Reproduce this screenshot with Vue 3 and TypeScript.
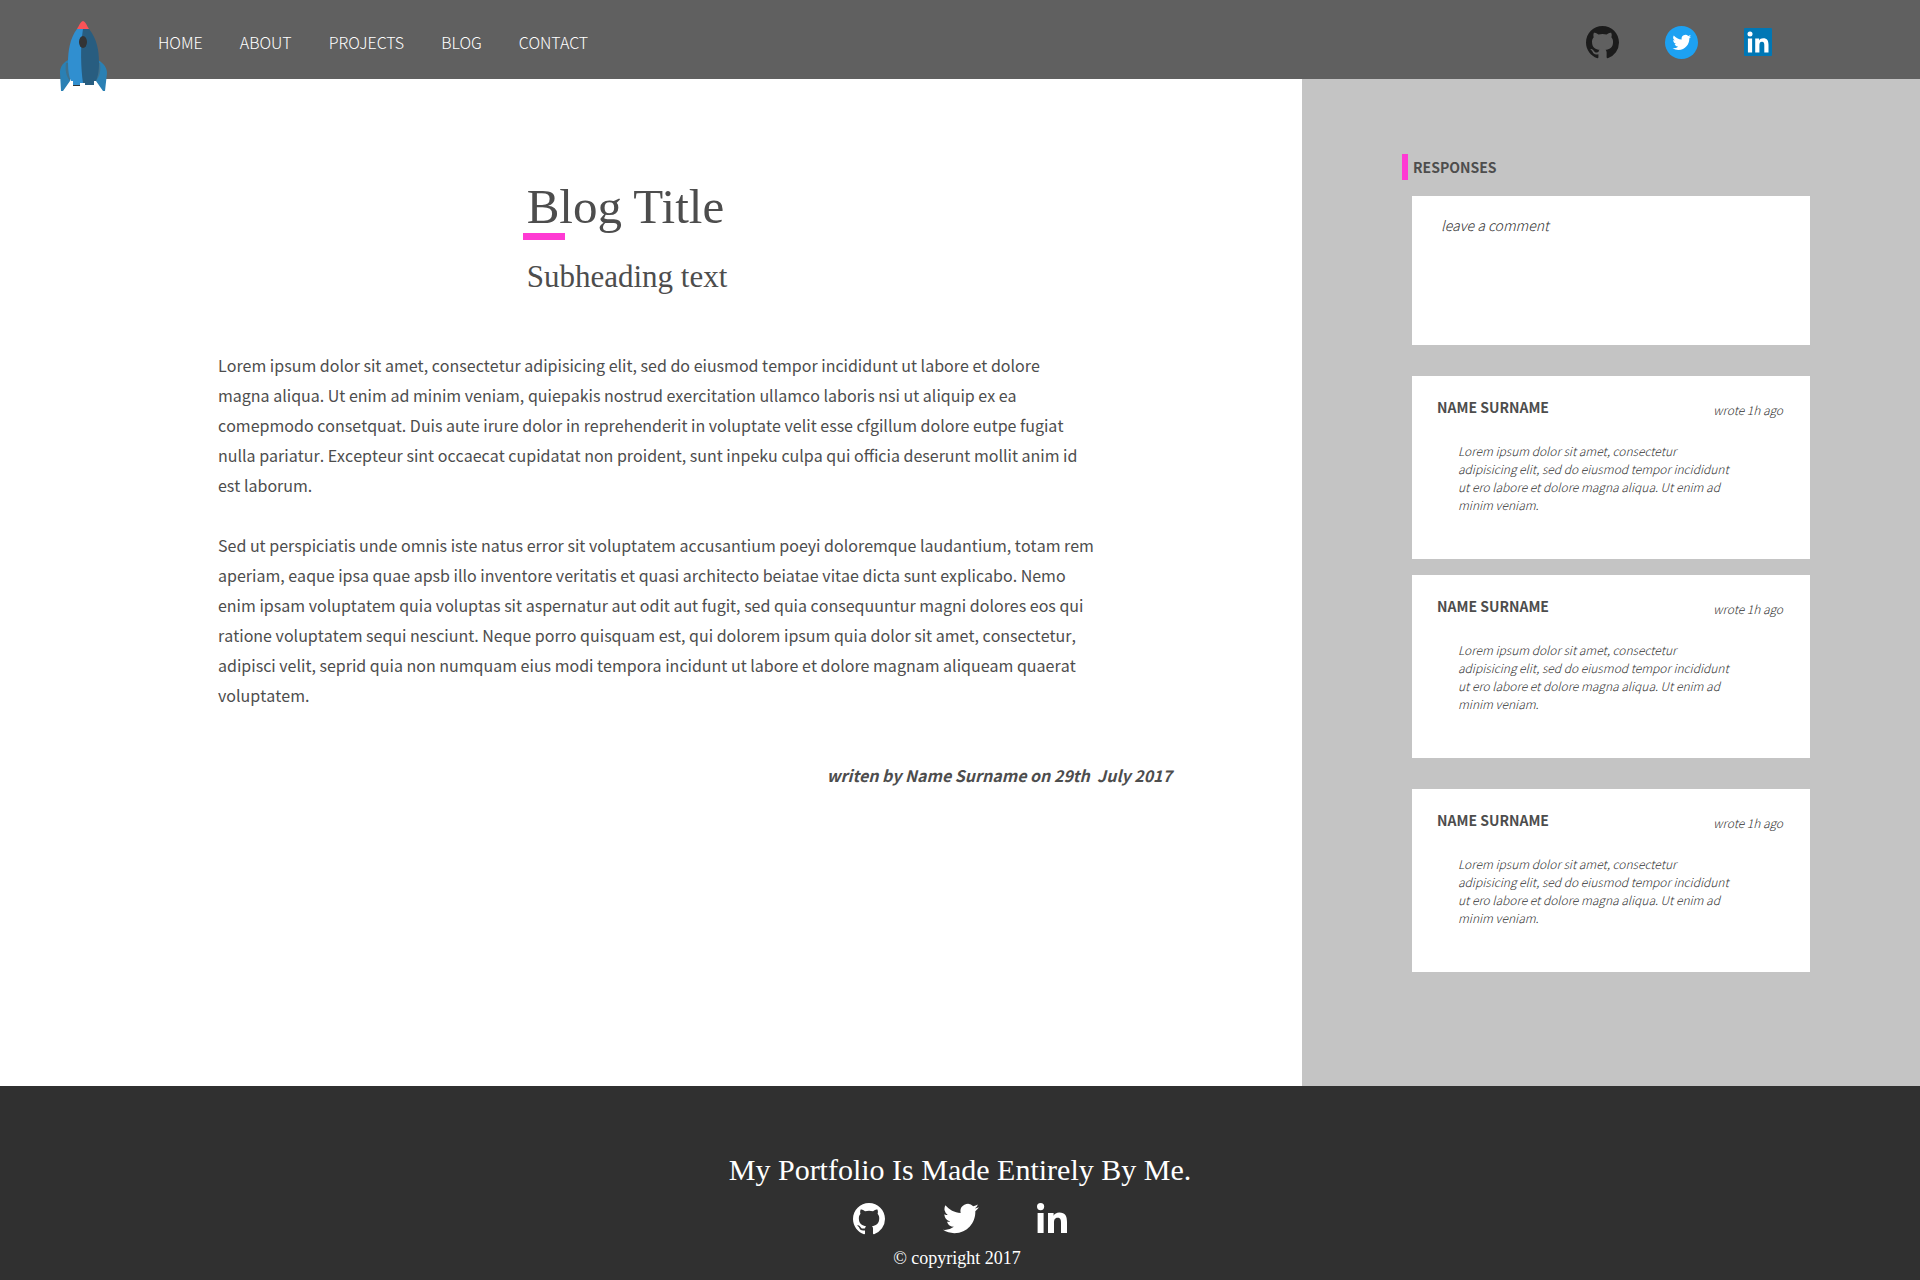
<script setup lang="ts">
interface Comment {
  id: number
  author: string
  posted: string
  text: string
}

const links: string[] = ['HOME', 'ABOUT', 'PROJECTS', 'BLOG', 'CONTACT']

const paragraphs: string[] = [
  `Lorem ipsum dolor sit amet, consectetur adipisicing elit, sed do eiusmod tempor incididunt ut labore et dolore
magna aliqua. Ut enim ad minim veniam, quiepakis nostrud exercitation ullamco laboris nsi ut aliquip ex ea
comepmodo consetquat. Duis aute irure dolor in reprehenderit in voluptate velit esse cfgillum dolore eutpe fugiat
nulla pariatur. Excepteur sint occaecat cupidatat non proident, sunt inpeku culpa qui officia deserunt mollit anim id
est laborum.`,
  `Sed ut perspiciatis unde omnis iste natus error sit voluptatem accusantium poeyi doloremque laudantium, totam rem
aperiam, eaque ipsa quae apsb illo inventore veritatis et quasi architecto beiatae vitae dicta sunt explicabo. Nemo
enim ipsam voluptatem quia voluptas sit aspernatur aut odit aut fugit, sed quia consequuntur magni dolores eos qui
ratione voluptatem sequi nesciunt. Neque porro quisquam est, qui dolorem ipsum quia dolor sit amet, consectetur,
adipisci velit, seprid quia non numquam eius modi tempora incidunt ut labore et dolore magnam aliqueam quaerat
voluptatem.`,
]

const commentText = `Lorem ipsum dolor sit amet, consectetur
adipisicing elit, sed do eiusmod tempor incididunt
ut ero labore et dolore magna aliqua. Ut enim ad
minim veniam.`

const comments: Comment[] = [1, 2, 3].map((id) => ({
  id,
  author: 'NAME SURNAME',
  posted: 'wrote 1h ago',
  text: commentText,
}))

const githubPath =
  'M8 0C3.58 0 0 3.58 0 8c0 3.54 2.29 6.53 5.47 7.59.4.07.55-.17.55-.38 0-.19-.01-.82-.01-1.49-2.01.37-2.53-.49-2.69-.94-.09-.23-.48-.94-.82-1.13-.28-.15-.68-.52-.01-.53.63-.01 1.08.58 1.23.82.72 1.21 1.87.87 2.33.66.07-.52.28-.87.51-1.07-1.78-.2-3.64-.89-3.64-3.95 0-.87.31-1.59.82-2.15-.08-.2-.36-1.02.08-2.12 0 0 .67-.21 2.2.82.64-.18 1.32-.27 2-.27s1.36.09 2 .27c1.53-1.04 2.2-.82 2.2-.82.44 1.1.16 1.92.08 2.12.51.56.82 1.27.82 2.15 0 3.07-1.87 3.75-3.65 3.95.29.25.54.73.54 1.48 0 1.07-.01 1.93-.01 2.2 0 .21.15.46.55.38A8.01 8.01 0 0 0 16 8c0-4.42-3.58-8-8-8z'
const twitterPath =
  'M23.95 4.57a10 10 0 0 1-2.82.77 4.96 4.96 0 0 0 2.16-2.72c-.95.55-2 .95-3.12 1.18a4.92 4.92 0 0 0-8.39 4.48C7.69 8.1 4.07 6.13 1.64 3.16a4.92 4.92 0 0 0 1.52 6.57 4.9 4.9 0 0 1-2.23-.61v.06c0 2.38 1.7 4.37 3.95 4.82a5 5 0 0 1-2.21.09 4.94 4.94 0 0 0 4.6 3.42A9.87 9.87 0 0 1 0 19.54a14 14 0 0 0 7.55 2.21c9.05 0 14-7.5 14-13.98 0-.21 0-.42-.02-.63a9.94 9.94 0 0 0 2.42-2.57z'
const linkedinPath =
  'M3.6 0a3.6 3.6 0 1 1 0 7.2 3.6 3.6 0 0 1 0-7.2zM.6 10h6v20h-6zM11 10h5.6v2.7c1-1.8 3-3.1 5.7-3.1C28.4 9.6 30 13.4 30 19v11h-6V20c0-2.6-.2-5.2-3.3-5.2S17 17.3 17 20v10h-6z'
</script>

<template>
  <div class="page">
    <header class="topbar">
      <a class="logo" href="#" aria-label="Home page">
        <svg width="47" height="70" viewBox="0 0 47 70">
          <path d="M8 39C1 43 0 48 0 52L1 70h2l7-10zM38 39c7 4 9 9 9 13l-2 18h-2l-7-10z" fill="#2a80b4" />
          <path d="M6 42c-1 7 0 13 4 18L13 42zM40 42c1 7 0 13-4 18L33 42z" fill="#40718c" />
          <path d="M17 8C10 17 8 30 8 42c0 8 1 14 3 18h2v4h7v-2h5V8z" fill="#308fd0" />
          <path d="M23 8h6c8 10 10 21 10 34 0 8-1 13-3 18h-2v4H25v-2h-2C21 48 20 26 23 8z" fill="#285d80" />
          <path d="M13 64h7v1h-7z" fill="#333" />
          <path d="M17 8c2-3 3-7 6-8 3 1 4 5 6 8z" fill="#fb5357" />
          <ellipse cx="23" cy="21" rx="4" ry="6" fill="#333435" />
        </svg>
      </a>
      <nav class="nav">
        <a v-for="link in links" :key="link" href="#">{{ link }}</a>
      </nav>
      <div class="social">
        <a href="#" aria-label="GitHub">
          <svg width="33" height="33" viewBox="0 0 16 16"><path :d="githubPath" fill="#1b1b1b" /></svg>
        </a>
        <a href="#" aria-label="Twitter">
          <svg width="33" height="33" viewBox="0 0 33 33">
            <circle cx="16.5" cy="16.5" r="16.5" fill="#1da1f2" />
            <path :d="twitterPath" fill="#fff" transform="translate(7.5 7) scale(.78)" />
          </svg>
        </a>
        <a href="#" aria-label="LinkedIn">
          <svg width="28" height="28" viewBox="0 0 28 28">
            <rect width="28" height="28" rx="1" fill="#0077b5" />
            <path :d="linkedinPath" fill="#fff" transform="translate(3.5 3.5) scale(.7)" />
          </svg>
        </a>
      </div>
    </header>

    <main class="content">
      <article class="post">
        <div class="heading">
          <div class="titles">
            <h1>Blog Title</h1>
            <h2>Subheading text</h2>
          </div>
        </div>
        <p v-for="(text, i) in paragraphs" :key="i" class="paragraph">{{ text }}</p>
        <p class="byline">writen by Name Surname on 29th&nbsp; July 2017</p>
      </article>

      <aside class="responses">
        <h3><label for="comment">RESPONSES</label></h3>
        <textarea id="comment" placeholder="leave a comment"></textarea>
        <section v-for="c in comments" :key="c.id" class="card">
          <div class="card-head">
            <h4>{{ c.author }}</h4>
            <span class="posted">{{ c.posted }}</span>
          </div>
          <p>{{ c.text }}</p>
        </section>
      </aside>
    </main>

    <footer class="footer">
      <p class="motto">My Portfolio Is Made Entirely By Me.</p>
      <div class="footer-social">
        <a href="#" aria-label="GitHub">
          <svg width="32" height="32" viewBox="0 0 16 16"><path :d="githubPath" fill="#fff" /></svg>
        </a>
        <a href="#" aria-label="Twitter">
          <svg width="36" height="31" viewBox="0 2 24 20"><path :d="twitterPath" fill="#fff" /></svg>
        </a>
        <a href="#" aria-label="LinkedIn">
          <svg width="30" height="30" viewBox="0 0 30 30"><path :d="linkedinPath" fill="#fff" /></svg>
        </a>
      </div>
      <p class="copyright">© copyright 2017</p>
    </footer>
  </div>
</template>

<style>
body {
  margin: 0;
}
</style>

<style scoped>
.page {
  display: flex;
  flex-direction: column;
  min-height: 100vh;
  color: #4d4d4d;
  background: #fff;
  font-family: "Noto Sans CJK SC", "Noto Sans", sans-serif;
}

h1, h2, h3, h4, p {
  margin: 0;
}

a {
  color: inherit;
  text-decoration: none;
}

svg {
  display: block;
}

.topbar {
  display: flex;
  align-items: flex-start;
  box-sizing: border-box;
  height: 79px;
  padding: 21px 148px 0 60px;
  color: #fff;
  background: #606060;
}

.logo {
  margin-right: 51px;
}

.nav {
  display: flex;
  gap: 37px;
  font-size: 16px;
  font-weight: 300;
  line-height: 42px;
}

.social {
  display: flex;
  align-items: center;
  gap: 46px;
  height: 42px;
  margin-left: auto;
}

.content {
  display: grid;
  flex: 1;
  grid-template-columns: minmax(0, 1302fr) minmax(0, 618fr);
}

.post {
  padding: 100px 130px 100px 218px;
}

.heading {
  display: flex;
  justify-content: center;
  margin: 0 136px 55px 0;
}

h1 {
  position: relative;
  font: 400 49px/56px "Liberation Serif", serif;
}

h1::after {
  position: absolute;
  top: 54px;
  left: -4px;
  width: 42px;
  height: 7px;
  background: #ff3ad3;
  content: "";
}

h2 {
  margin-top: 24px;
  font: 400 31px/36px "Liberation Serif", serif;
}

.paragraph {
  margin-bottom: 30px;
  font-size: 16px;
  font-kerning: none;
  line-height: 30px;
  white-space: pre-line;
}

.byline {
  margin-top: 50px;
  font-size: 16px;
  font-style: italic;
  font-weight: 700;
  line-height: 30px;
  text-align: right;
}

.responses {
  padding: 75px 110px 114px 100px;
  background: #c4c4c4;
}

h3 {
  padding-left: 5px;
  border-left: 6px solid #ff3ad3;
  font-size: 14px;
  line-height: 26px;
}

textarea {
  display: block;
  box-sizing: border-box;
  width: calc(100% - 10px);
  height: 149px;
  margin: 16px 0 31px 10px;
  padding: 17px 29px;
  border: 0;
  outline: 0;
  color: #333;
  background: #fff;
  font: italic 300 14px/24px "Noto Sans CJK SC", sans-serif;
  resize: none;
}

textarea::placeholder {
  color: #333;
  opacity: 1;
}

.card {
  box-sizing: border-box;
  min-height: 183px;
  margin: 0 0 16px 10px;
  padding: 19px 27px 20px 25px;
  background: #fff;
}

.card:last-child {
  margin: 31px 0 0 10px;
}

.card-head {
  display: flex;
  justify-content: space-between;
}

h4 {
  font-size: 14px;
  line-height: 24px;
}

.posted {
  color: #333;
  font-size: 12px;
  font-style: italic;
  font-weight: 300;
  line-height: 30px;
}

.card p {
  margin: 17px 0 0 21px;
  color: #333;
  font-size: 12px;
  font-style: italic;
  font-weight: 300;
  line-height: 18px;
  white-space: pre-line;
}

.footer {
  box-sizing: border-box;
  min-height: 194px;
  padding: 66px 0 10px;
  color: #fff;
  background: #303030;
  font-family: "Liberation Serif", serif;
  text-align: center;
}

.motto {
  font-size: 30px;
  line-height: 36px;
}

.footer-social {
  display: flex;
  justify-content: center;
  gap: 58px;
  margin: 15px 0 12px;
}

.copyright {
  margin-right: 6px;
  font-size: 18px;
  line-height: 22px;
}
</style>
